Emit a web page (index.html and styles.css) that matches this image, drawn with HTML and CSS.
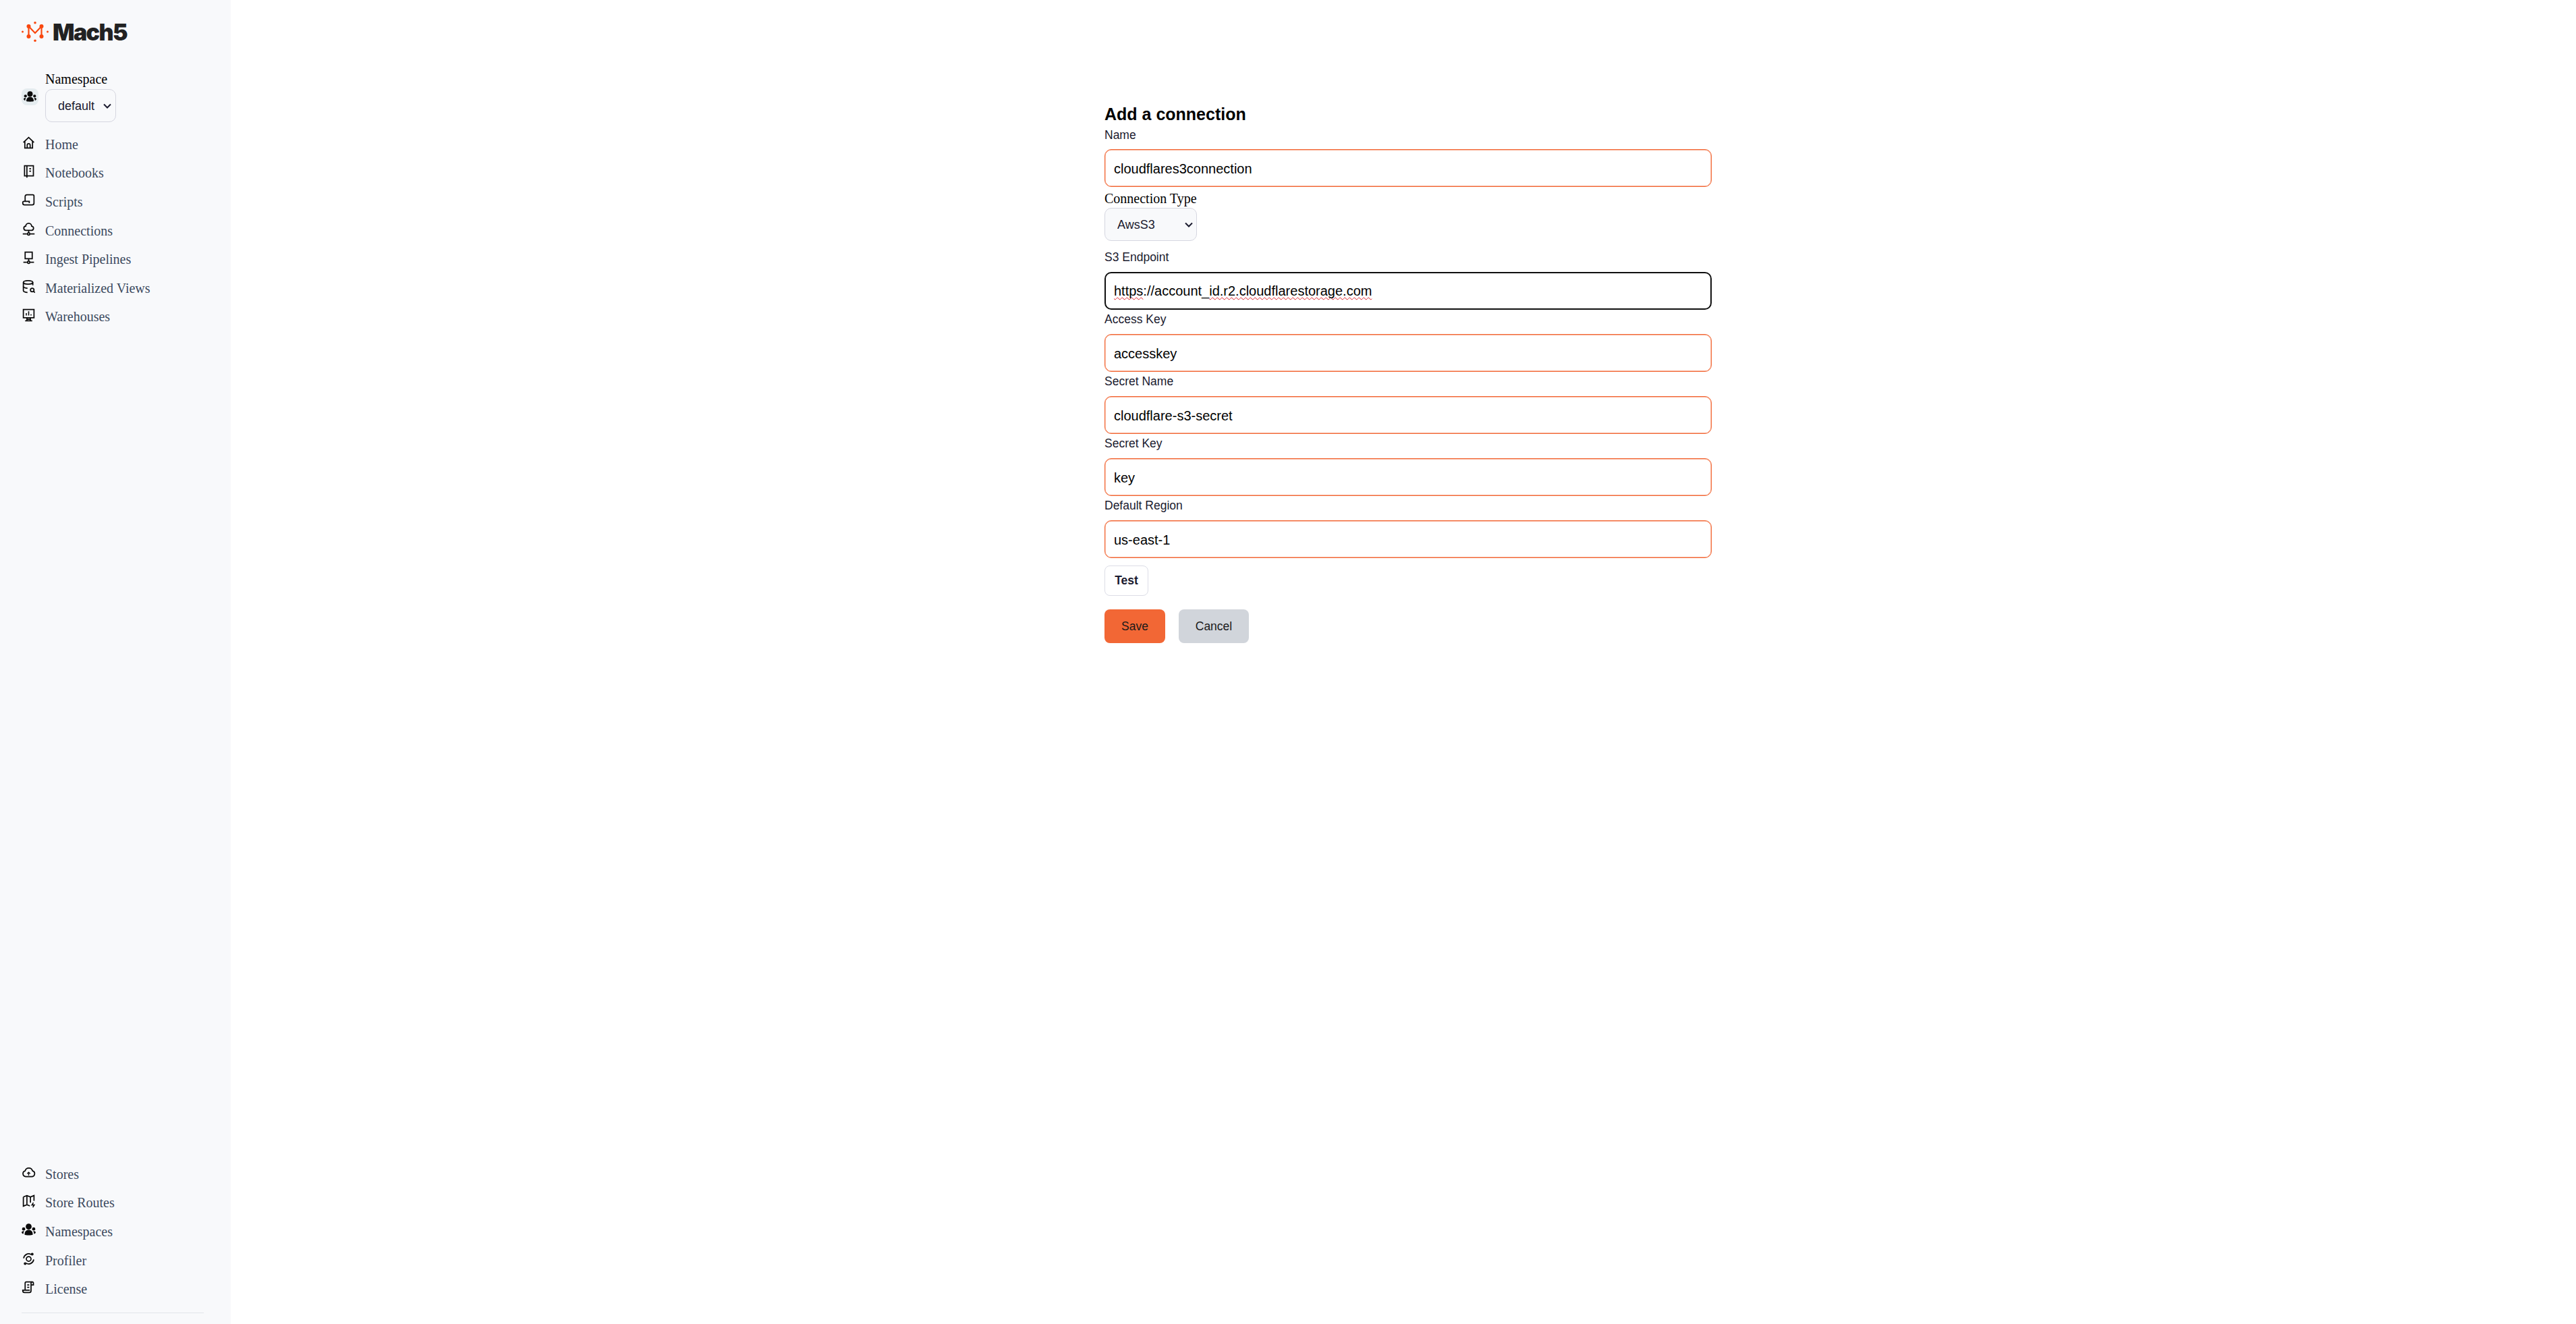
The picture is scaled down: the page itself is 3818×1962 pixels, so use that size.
FILE: index.html
```html
<!DOCTYPE html>
<html lang="en">
<head>
    <meta charset="UTF-8">
    <title>Mach5 - Add a connection</title>
    <link rel="stylesheet" href="styles.css">
</head>
<body>

    <!-- Sidebar -->
    <aside class="sidebar">
        <div class="sidebar-top">
            <div class="logo">
                <svg class="logo-mark" viewBox="0 0 40 30" fill="#f9480f">
                    <circle cx="20" cy="1.800" r="1.800"/><circle cx="20" cy="28.200" r="1.800"/>
                    <circle cx="1.500" cy="15" r="1.500"/><circle cx="38.500" cy="15" r="1.500"/>
                    <circle cx="10.500" cy="7" r="3"/><circle cx="29.500" cy="7" r="3"/>
                    <circle cx="10.500" cy="22" r="3"/><circle cx="29.500" cy="22" r="3"/>
                    <path d="M10.500 22V7L20 17l9.500-10v15" fill="none" stroke="#f9480f" stroke-width="2.200"/>
                </svg>
                <span class="logo-text">Mach5</span>
            </div>

            <div class="namespace">
                <div class="namespace-icon">
                    <svg viewBox="0 0 24 24" fill="#0b0b0b"><use href="#i-team"/></svg>
                </div>
                <div class="namespace-field">
                    <label class="namespace-label" for="namespace">Namespace</label>
                    <select id="namespace" class="namespace-select">
                        <option>default</option>
                    </select>
                </div>
            </div>

            <nav class="nav">
                <a class="nav-item"><svg class="nav-icon" viewBox="0 0 24 24"><path d="M3 11.500 12 3l9 8.500"/><path d="M5.500 9.500V21h13V9.500"/><path d="M9.500 21v-5a2.500 2.500 0 0 1 5 0v5"/></svg>Home</a>
                <a class="nav-item"><svg class="nav-icon" viewBox="0 0 24 24"><path d="M5 3h15v17H5z"/><path d="M9 3v20"/><path d="M13 8h3M13 12h3"/></svg>Notebooks</a>
                <a class="nav-item"><svg class="nav-icon" viewBox="0 0 24 24"><path d="M6 14V6a3 3 0 0 1 3-3h10a2 2 0 0 1 2 2v12a3 3 0 0 1-3 3H5a3 3 0 0 1-3-3v-1a2 2 0 0 1 2-2h9v3"/></svg>Scripts</a>
                <a class="nav-item"><svg class="nav-icon" viewBox="0 0 24 24"><path d="M7.500 14a3.500 3.500 0 0 1-.5-7 5 5 0 0 1 10 0 3.500 3.500 0 0 1-.5 7z"/><path d="M12 14v4"/><path d="M2 20h7M15 20h7"/><circle cx="12" cy="20" r="2"/></svg>Connections</a>
                <a class="nav-item"><svg class="nav-icon" viewBox="0 0 24 24"><path d="M6 3h12v11H6z"/><path d="M12 14v4"/><path d="M3 20h6M15 20h6"/><circle cx="12" cy="20" r="2"/></svg>Ingest Pipelines</a>
                <a class="nav-item"><svg class="nav-icon" viewBox="0 0 24 24"><ellipse cx="11" cy="5" rx="8" ry="3"/><path d="M3 5v14c0 1.500 3 3 7 3"/><path d="M19 5v5"/><path d="M3 12c0 1.500 3 3 7 3"/><circle cx="18" cy="18" r="3"/><path d="m20.500 20.500 2 2"/></svg>Materialized Views</a>
                <a class="nav-item"><svg class="nav-icon" viewBox="0 0 24 24"><path d="M3 3h18v14H3z"/><path d="M9 17v5M15 17v5M6 22h12M9 19.500h6"/><path d="M8 13V9M12 13V6M16 13v-2" stroke-width="1.800"/></svg>Warehouses</a>
            </nav>
        </div>

        <div class="sidebar-bottom">
            <nav class="nav">
                <a class="nav-item"><svg class="nav-icon" viewBox="0 0 24 24"><path d="M7 19a5 5 0 0 1-1-9.800 6.500 6.500 0 0 1 12.500 0A5 5 0 0 1 17 19z"/><path d="M12 17v-5M9.500 14l2.500-2.500 2.500 2.500" stroke-width="1.500"/></svg>Stores</a>
                <a class="nav-item"><svg class="nav-icon" viewBox="0 0 24 24"><path d="M3 5.500 9 3l6 2.500L21 3v9M3 5.500V21l6-2.500 5 2M9 3v15.500M15 5.500V15"/><path d="m20 15-2.500 4h4L19 23" stroke-width="1.800"/></svg>Store Routes</a>
                <a class="nav-item"><svg class="nav-icon nav-icon-fill" viewBox="0 0 24 24"><use href="#i-team"/></svg>Namespaces</a>
                <a class="nav-item"><svg class="nav-icon" viewBox="0 0 24 24"><circle cx="12" cy="12" r="4"/><path d="M3.500 11A8.500 8.500 0 0 1 16 4.500"/><path d="M20.500 13A8.500 8.500 0 0 1 8 19.500"/><circle cx="18" cy="4" r="1.300"/><circle cx="6" cy="20" r="1.300"/></svg>Profiler</a>
                <a class="nav-item"><svg class="nav-icon" viewBox="0 0 24 24"><path d="M18 3H8a2 2 0 0 0-2 2v12"/><path d="M18 3a2 2 0 0 1 2 2v3h-3M18 3a2 2 0 0 0-2 2v13a3 3 0 0 1-3 3H5a3 3 0 0 1-3-3v-1h11v1"/><path d="M9.500 8h3.500M9.500 12h3.500"/></svg>License</a>
            </nav>
            <hr class="sidebar-rule">
        </div>
    </aside>

    <!-- Form -->
    <main class="main">
        <form class="connection-form">
            <h1 class="form-title">Add a connection</h1>

            <label class="field-label first">Name</label>
            <input class="field-input" type="text" value="cloudflares3connection">

            <label class="type-label">Connection Type</label>
            <select class="type-select">
                <option>AwsS3</option>
            </select>

            <label class="field-label">S3 Endpoint</label>
            <div class="field-input field-focused"><span class="misspelt">https</span>://account_<span class="misspelt">id.r2.cloudflarestorage.com</span></div>

            <label class="field-label">Access Key</label>
            <input class="field-input" type="text" value="accesskey">

            <label class="field-label">Secret Name</label>
            <input class="field-input" type="text" value="cloudflare-s3-secret">

            <label class="field-label">Secret Key</label>
            <input class="field-input" type="text" value="key">

            <label class="field-label">Default Region</label>
            <input class="field-input" type="text" value="us-east-1">

            <button type="button" class="btn-test">Test</button>

            <div class="form-actions">
                <button type="button" class="btn btn-save">Save</button>
                <button type="button" class="btn btn-cancel">Cancel</button>
            </div>
        </form>
    </main>

    <!-- shared icon -->
    <svg class="icon-defs" width="0" height="0">
        <symbol id="i-team" viewBox="0 0 24 24">
            <circle cx="12" cy="6.500" r="5"/>
            <circle cx="3.500" cy="10.500" r="2.700"/>
            <circle cx="20.500" cy="10.500" r="2.700"/>
            <path d="M5 20c0-5 3-8 7-8s7 3 7 8c-2 1.500-12 1.500-14 0z"/>
            <path d="M0 16c.5-1.500 2-2 4.300-2-.8 1.400-1.300 3-1.300 4.800-1.500-.2-2.700-1-3-2.800zM24 16c-.5-1.500-2-2-4.300-2 .8 1.400 1.300 3 1.300 4.800 1.500-.2 2.700-1 3-2.800z"/>
        </symbol>
    </svg>

</body>
</html>
```

FILE: styles.css
```css
html, body {
    height: 100%;
}

body {
    margin: 0;
    display: flex;
    overflow: hidden;
    background-color: #fff;
    color: #000;
    font-family: "Liberation Serif", serif;
}

.icon-defs {
    position: absolute;
}

/* Sidebar */
.sidebar {
    width: 342px;
    flex-shrink: 0;
    box-sizing: border-box;
    padding: 32px 40px 16px 32px;
    display: flex;
    flex-direction: column;
    justify-content: space-between;
    background-color: #f8f9fb;
}

.logo {
    display: flex;
    align-items: center;
    gap: 6px;
    height: 30px;
}

.logo-mark {
    width: 40px;
    height: 30px;
}

.logo-text {
    font-family: "Inter", sans-serif;
    font-size: 34px;
    font-weight: 900;
    letter-spacing: -1.600px;
    color: #222;
}

.namespace {
    display: flex;
    align-items: center;
    gap: 10px;
    margin-top: 43px;
}

.namespace-icon {
    width: 25px;
    height: 25px;
    border-radius: 8px;
    background-color: #e5ecef;
    display: flex;
    align-items: center;
    justify-content: center;
}

.namespace-icon svg {
    width: 19px;
    height: 19px;
}

.namespace-field {
    display: flex;
    flex-direction: column;
}

.namespace-label {
    font-size: 20px;
    line-height: 24px;
    margin-bottom: 3px;
}

.namespace-select {
    appearance: none;
    width: 105px;
    height: 49px;
    padding: 1px 0 0 18px;
    border: 1px solid #d5d6e0;
    border-radius: 10px;
    background: #f8f9fb url("data:image/svg+xml,%3Csvg xmlns='http://www.w3.org/2000/svg' viewBox='0 0 12 8'%3E%3Cpath d='M1 1.500l5 5 5-5' fill='none' stroke='%231a1a2e' stroke-width='2'/%3E%3C/svg%3E") no-repeat right 6px center / 12px 8px;
    color: #1a1a2e;
    font-family: "Liberation Sans", sans-serif;
    font-size: 18px;
}

.nav {
    display: flex;
    flex-direction: column;
}

.sidebar-top .nav {
    margin-top: 12px;
}

.nav-item {
    display: flex;
    align-items: center;
    height: 42.600px;
    gap: 14px;
    font-size: 20px;
    color: #3c4a5e;
}

.nav-icon {
    width: 21px;
    height: 21px;
    margin-top: -6px;
    flex-shrink: 0;
    fill: none;
    stroke: #0b0b0b;
    stroke-width: 2;
}

.nav-icon-fill {
    fill: #0b0b0b;
    stroke: none;
}

.sidebar-rule {
    width: 270px;
    margin: 13px 0 0;
    border: none;
    border-top: 1px solid #e2e5ea;
}

/* Form */
.main {
    flex: 1;
    display: flex;
    justify-content: center;
    padding: 154px 0 0 14px;
}

.connection-form {
    width: 900px;
}

.form-title {
    margin: 0;
    font-family: "Liberation Sans", sans-serif;
    font-size: 25px;
    line-height: 30px;
    font-weight: bold;
}

.field-label {
    display: block;
    font-family: "Liberation Sans", sans-serif;
    font-size: 17.500px;
    line-height: 24px;
    margin-top: 2px;
    margin-bottom: 10px;
    color: #1a1a2e;
}

.field-label.first {
    margin-bottom: 9px;
    margin-top: 4px;
}

.field-input {
    display: block;
    box-sizing: border-box;
    width: 100%;
    height: 56px;
    padding: 3px 13px 0;
    border: 1px solid #f26735;
    border-radius: 10px;
    box-shadow: inset 0 0 0 0.400px #f26735;
    background-color: #fff;
    color: #000;
    font-family: "Liberation Sans", sans-serif;
    font-size: 20px;
    line-height: 51px;
    outline: none;
}

.field-focused {
    border: 2px solid #0f0f0f;
    box-shadow: none;
    padding: 0 12px;
    line-height: 53px;
}

.misspelt {
    text-decoration: underline wavy #e0202a 1px;
    text-decoration-skip-ink: none;
    text-underline-offset: 2px;
}

.type-label {
    display: block;
    font-size: 20px;
    line-height: 24px;
    margin-top: 5px;
}

.type-select {
    appearance: none;
    display: block;
    width: 137px;
    height: 49px;
    margin-top: 2px;
    padding: 1px 0 0 18px;
    border: 1px solid #d5d6e0;
    border-radius: 10px;
    background: #f8f9fb url("data:image/svg+xml,%3Csvg xmlns='http://www.w3.org/2000/svg' viewBox='0 0 12 8'%3E%3Cpath d='M1 1.500l5 5 5-5' fill='none' stroke='%231a1a2e' stroke-width='2'/%3E%3C/svg%3E") no-repeat right 5px center / 12px 8px;
    color: #1a1a2e;
    font-family: "Liberation Sans", sans-serif;
    font-size: 18px;
}

.type-select + .field-label {
    margin-top: 12px;
}

.btn-test {
    display: block;
    width: 65px;
    height: 45px;
    margin-top: 11px;
    padding: 0;
    border: 1px solid #dcdde6;
    border-radius: 8px;
    background-color: #fff;
    color: #1a1a2e;
    font-family: "Liberation Sans", sans-serif;
    font-size: 17.500px;
    font-weight: bold;
}

.form-actions {
    display: flex;
    gap: 20px;
    margin-top: 20px;
}

.btn {
    height: 50px;
    padding: 0;
    border: none;
    border-radius: 8px;
    color: #1a1a1a;
    font-family: "Liberation Sans", sans-serif;
    font-size: 17.500px;
}

.btn-save {
    width: 90px;
    background-color: #f26735;
}

.btn-cancel {
    width: 104px;
    background-color: #d1d5db;
}
```
